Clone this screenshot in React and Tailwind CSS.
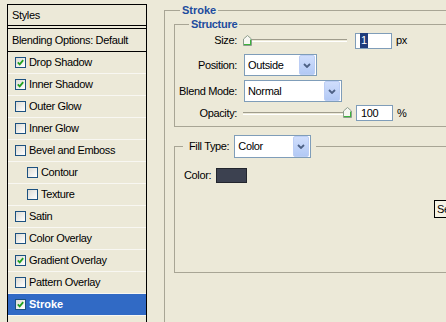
const layers = [
  { name: 'Drop Shadow', on: true },
  { name: 'Inner Shadow', on: true },
  { name: 'Outer Glow' },
  { name: 'Inner Glow' },
  { name: 'Bevel and Emboss' },
  { name: 'Contour', sub: true },
  { name: 'Texture', sub: true },
  { name: 'Satin' },
  { name: 'Color Overlay' },
  { name: 'Gradient Overlay', on: true },
  { name: 'Pattern Overlay' },
  { name: 'Stroke', on: true, active: true },
];

const Check = ({ on }) => (
  <span className="w-[11px] h-[11px] shrink-0 border border-[#1c5180] bg-linear-to-br from-[#dcdbd5] to-white flex items-center justify-center">
    {on && (
      <svg width="7" height="7" viewBox="0 0 7 7">
        <path d="M0.8 3.4 L2.7 5.3 L6.2 1.2" stroke="#21a121" strokeWidth="1.8" fill="none" />
      </svg>
    )}
  </span>
);

const Arrow = ({ h }) => (
  <div className={`w-[16px] ${h} mr-px rounded-[2px] border border-[#bccef5] bg-linear-to-b from-[#d0defc] to-[#b2c9f5] flex items-center justify-center`}>
    <svg width="8" height="5" viewBox="0 0 8 5">
      <path d="M1 1 L4 4 L7 1" stroke="#4d6185" strokeWidth="1.8" fill="none" />
    </svg>
  </div>
);

const Select = ({ value, w, h = 'h-[22px]', ah = 'h-[20px]' }) => (
  <div className={`${w} ${h} bg-white border border-[#7f9db9] flex items-center justify-between`}>
    <span className="pl-[3px] text-black">{value}</span>
    <Arrow h={ah} />
  </div>
);

const Thumb = () => (
  <svg width="9" height="11" viewBox="0 0 9 11">
    <path d="M0.5 4 L4.5 0.5 L8.5 4 V10.5 H0.5 Z" fill="#f7f7f2" stroke="#8c9c8c" />
    <path d="M1 9.5 H8 M7.5 4.5 V9.5" stroke="#3cb43c" />
  </svg>
);

const Slider = ({ w, end }) => (
  <div className={`${w} h-[12px] relative flex items-center`}>
    <div className="w-full h-[3px] border-t border-[#a09d8d] border-b border-b-white" />
    <div className={end ? 'absolute right-0 top-0' : 'absolute left-0 top-0'}>
      <Thumb />
    </div>
  </div>
);

const Field = ({ children }) => (
  <div className="ml-[8px] w-[37px] h-[16px] bg-white border border-[#7f9db9] flex items-center pl-[4px]">
    {children}
  </div>
);

export default function App() {
  return (
    <div className="w-[446px] h-[322px] overflow-hidden bg-[#ece9d8] flex text-[11px] tracking-[-0.35px] text-black font-['Liberation_Sans',Arial,sans-serif] leading-none">
      <div className="ml-[7px] mt-[4px] w-[140px] shrink-0 border-x border-t border-black flex flex-col">
        <div className="h-[21px] shrink-0 border-b border-black flex items-center pl-[4px]">Styles</div>
        <div className="h-[2px] shrink-0" />
        <div className="h-[24px] shrink-0 border-y border-black flex items-center pl-[4px]">Blending Options: Default</div>
        {layers.map((l) => (
          <div
            key={l.name}
            className={`h-[22px] shrink-0 border-b border-[#f8f7f2] flex items-center gap-[3px] ${l.sub ? 'pl-[19px]' : 'pl-[7px]'} ${l.active ? 'bg-[#316ac5] text-white font-bold tracking-normal' : ''}`}
          >
            <Check on={l.on} />
            <span>{l.name}</span>
          </div>
        ))}
        <div className="h-[22px] shrink-0" />
      </div>

      <fieldset className="ml-[17px] mt-[4px] w-[320px] h-[340px] shrink-0 border border-[#a8a595]">
        <legend className="ml-[15px] px-[2px] font-bold text-[#1d4c9e] leading-[13px] tracking-normal">Stroke</legend>

        <fieldset className="ml-[9px] mt-px w-[300px] h-[109px] border border-[#a8a595]">
          <legend className="ml-[14px] px-[2px] font-bold text-[#1d4c9e] leading-[13px] tracking-[-0.3px]">Structure</legend>
          <div className="flex flex-col">
            <div className="mt-px h-[17px] flex items-center">
              <span className="w-[62px] text-right">Size:</span>
              <div className="ml-[6px]">
                <Slider w="w-[104px]" />
              </div>
              <Field>
                <span className="bg-[#1f3c7c] text-white px-px py-[2px]">1</span>
              </Field>
              <span className="ml-[4px]">px</span>
            </div>
            <div className="mt-[5px] flex items-center">
              <span className="w-[62px] text-right">Position:</span>
              <div className="ml-[7px]">
                <Select value="Outside" w="w-[73px]" />
              </div>
            </div>
            <div className="mt-[4px] flex items-center">
              <span className="w-[62px] text-right">Blend Mode:</span>
              <div className="ml-[7px]">
                <Select value="Normal" w="w-[98px]" />
              </div>
            </div>
            <div className="mt-[3px] h-[16px] flex items-center">
              <span className="w-[62px] text-right">Opacity:</span>
              <div className="ml-[6px]">
                <Slider w="w-[109px]" end />
              </div>
              <div className="-ml-[4px]">
                <Field>100</Field>
              </div>
              <span className="ml-[4px]">%</span>
            </div>
          </div>
        </fieldset>

        <fieldset className="ml-[9px] mt-[8px] w-[300px] h-[138px] border border-[#a8a595] relative">
          <legend className="ml-[8px] pl-[6px] pr-[5px]">
            <div className="flex items-center">
              <span>Fill Type:</span>
              <div className="ml-[5px]">
                <Select value="Color" w="w-[77px]" h="h-[23px]" ah="h-[21px]" />
              </div>
            </div>
          </legend>
          <div className="mt-[10px] h-[15px] flex items-center pl-[9px]">
            <span className="w-[32px]">Color:</span>
            <div className="w-[31px] h-[15px] bg-[#3c4150] border border-[#22252d]" />
          </div>
          <div className="absolute left-[259px] top-[42px] h-[18px] border border-black bg-[#f5f3e6] flex items-center px-[2px] whitespace-nowrap">
            Set stroke color
          </div>
        </fieldset>
      </fieldset>
    </div>
  );
}
